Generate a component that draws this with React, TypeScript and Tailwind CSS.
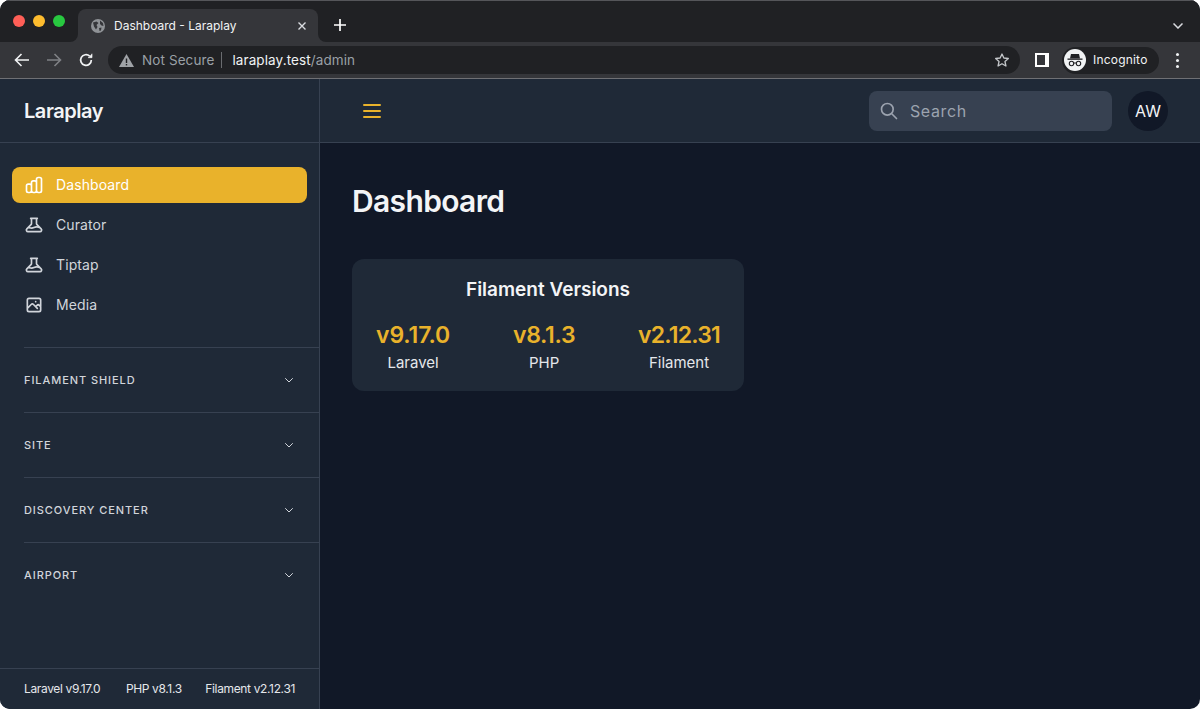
import React from "react";
import { HiOutlineChartBar, HiOutlineBeaker, HiOutlinePhotograph, HiOutlineChevronDown, HiOutlineSearch, HiOutlineMenu } from "react-icons/hi";

const font = "font-['Inter','Liberation_Sans',sans-serif]";

function NavItem({ icon, label, active }: { icon: React.ReactNode; label: string; active?: boolean }) {
  return (
    <div className={`flex items-center gap-[12px] h-[36px] px-[12px] rounded-[8px] text-[14px] tracking-[0.1px] ${active ? "bg-[#e9b22b] text-white" : "text-[#d1d5db]"}`}>
      {icon}
      <span className="pb-[1px]">{label}</span>
    </div>
  );
}

function Group({ label }: { label: string }) {
  return (
    <div className="ml-[24px] h-[65px] border-t border-[#374151] flex items-center justify-between pr-[24px] shrink-0">
      <span className="text-[11px] font-medium tracking-[0.92px] text-[#d1d5db] leading-none">{label}</span>
      <HiOutlineChevronDown className="w-[12px] h-[12px] text-[#d1d5db]" />
    </div>
  );
}

function Stat({ value, label, tracking }: { value: string; label: string; tracking: string }) {
  return (
    <div className="flex flex-col items-center">
      <div className={`text-[23px] leading-[28px] font-semibold text-[#e9b22b] ${tracking}`}>{value}</div>
      <div className="text-[15px] leading-[20px] mt-[4px] text-[#e5e7eb]">{label}</div>
    </div>
  );
}

export default function App() {
  return (
    <div className={`w-[1200px] h-[709px] bg-white ${font}`}>
      <div className="w-full h-full rounded-[10px] overflow-hidden flex flex-col bg-[#111827]">
        {/* Tab strip */}
        <div className="h-[42px] shrink-0 bg-[#202124] border-t border-[#55565a] flex items-end relative">
          <div className="flex items-center gap-[8px] pl-[13px] pt-[1px] h-full pb-[2px] absolute left-0 top-0">
            <span className="w-[12px] h-[12px] rounded-full bg-[#ff5f57]" />
            <span className="w-[12px] h-[12px] rounded-full bg-[#febc2e]" />
            <span className="w-[12px] h-[12px] rounded-full bg-[#28c840]" />
          </div>
          <div className="ml-[78px] w-[240px] h-[33px] bg-[#35363a] rounded-t-[8px] flex items-center pl-[13px] pr-[10px] text-[12px] text-[#f1f3f4] relative">
            <div className="absolute left-[-8px] bottom-0 w-[8px] h-[8px] bg-[#35363a]">
              <div className="w-full h-full bg-[#202124] rounded-br-[8px]" />
            </div>
            <div className="absolute right-[-8px] bottom-0 w-[8px] h-[8px] bg-[#35363a]">
              <div className="w-full h-full bg-[#202124] rounded-bl-[8px]" />
            </div>
            <svg width="14" height="14" viewBox="0 0 14 14" className="shrink-0">
              <circle cx="7" cy="7" r="7" fill="#8f9296" />
              <path d="M2 3.5 L5.5 2.5 L7.5 4 L5.5 6 L6.5 8 L5 10.5 L3 7.5 Z M9 1.5 L12 4 L12.5 7 L10.5 6.5 L9 5 Z M8 9 L10.5 8.5 L10 11.5 L8.5 12 Z" fill="#35363a" />
            </svg>
            <span className="ml-[9px] flex-1 whitespace-nowrap">Dashboard - Laraplay</span>
            <svg width="10" height="10" viewBox="0 0 10 10" stroke="#dadce0" strokeWidth="1.4" className="mr-[1px]">
              <path d="M1.5 1.5 L8.5 8.5 M8.5 1.5 L1.5 8.5" />
            </svg>
          </div>
          <svg width="12" height="12" viewBox="0 0 12 12" stroke="#ffffff" strokeWidth="1.7" className="ml-[16px] mb-[11px]">
            <path d="M6 0 V12 M0 6 H12" />
          </svg>
          <svg width="10" height="6" viewBox="0 0 10 6" fill="none" stroke="#dadce0" strokeWidth="1.5" className="ml-auto mr-[17px] mb-[13px]">
            <path d="M0.5 0.5 L5 5 L9.5 0.5" />
          </svg>
        </div>
        {/* Toolbar */}
        <div className="h-[37px] shrink-0 bg-[#35363a] border-b border-[#6f7074] flex items-center">
          <svg width="16" height="14" viewBox="0 0 16 14" fill="none" stroke="#f1f3f4" strokeWidth="1.6" className="ml-[14px]">
            <path d="M15 7 H2 M7.5 1 L1.5 7 L7.5 13" />
          </svg>
          <svg width="16" height="14" viewBox="0 0 16 14" fill="none" stroke="#7f8185" strokeWidth="1.6" className="ml-[16px]">
            <path d="M1 7 H14 M8.5 1 L14.5 7 L8.5 13" />
          </svg>
          <svg width="16" height="16" viewBox="0 0 24 24" fill="none" stroke="#f1f3f4" strokeWidth="2.6" className="ml-[16px]">
            <path d="M20 12a8 8 0 1 1-2.5-5.8" />
            <path d="M21 2.5 V8.5 H15" fill="#f1f3f4" strokeWidth="1" />
          </svg>
          <div className="ml-[14px] w-[912px] h-[28px] rounded-full bg-[#202124] flex items-center pl-[11px] pr-[10px] text-[13.5px] tracking-[0.1px]">
            <svg width="15" height="13" viewBox="0 0 15 13" className="shrink-0">
              <path d="M7.5 0 L15 13 H0 Z" fill="#a0a3a7" />
              <rect x="6.8" y="4.5" width="1.4" height="4.5" fill="#202124" />
              <rect x="6.8" y="10" width="1.4" height="1.4" fill="#202124" />
            </svg>
            <span className="ml-[8px] text-[#9aa0a6]">Not Secure</span>
            <span className="ml-[7px] w-px h-[16px] bg-[#6a6c70]" />
            <span className="ml-[10px] text-[#f1f3f4]">laraplay.test</span>
            <span className="text-[#9aa0a6]">/admin</span>
            <svg width="16" height="16" viewBox="0 0 24 24" fill="none" stroke="#c4c7ca" strokeWidth="2" className="ml-auto">
              <path d="M12 3 L14.8 9 L21.5 9.8 L16.5 14.3 L17.9 21 L12 17.6 L6.1 21 L7.5 14.3 L2.5 9.8 L9.2 9 Z" strokeLinejoin="round" />
            </svg>
          </div>
          <div className="ml-[15px] w-[14px] h-[14px] bg-white flex justify-start">
            <span className="ml-[2px] mt-[2px] w-[8px] h-[10px] bg-[#35363a]" />
          </div>
          <div className="ml-[13px] w-[97px] h-[27px] rounded-full bg-[#202124] flex items-center pl-[2px] text-[12px] tracking-[0.2px] text-[#f1f3f4]">
            <div className="w-[22px] h-[22px] rounded-full bg-[#f1f3f4] flex items-center justify-center">
              <svg width="16" height="14" viewBox="0 0 16 14" fill="none">
                <path d="M4 1 H12 L13 5.5 H3 Z" fill="#202124" />
                <rect x="0.5" y="5.5" width="15" height="1.3" fill="#202124" />
                <circle cx="4.5" cy="10.5" r="2.2" stroke="#202124" strokeWidth="1.1" />
                <circle cx="11.5" cy="10.5" r="2.2" stroke="#202124" strokeWidth="1.1" />
                <path d="M6.7 10 H9.3" stroke="#202124" strokeWidth="1" />
              </svg>
            </div>
            <span className="ml-[7px]">Incognito</span>
          </div>
          <div className="ml-[17px] flex flex-col gap-[3px]">
            <span className="w-[3px] h-[3px] rounded-full bg-[#f1f3f4]" />
            <span className="w-[3px] h-[3px] rounded-full bg-[#f1f3f4]" />
            <span className="w-[3px] h-[3px] rounded-full bg-[#f1f3f4]" />
          </div>
        </div>
        {/* App */}
        <div className="flex-1 flex min-h-0">
          <aside className="w-[320px] shrink-0 bg-[#1f2937] border-r border-[#374151] flex flex-col">
            <div className="h-[64px] shrink-0 border-b border-[#374151] flex items-center px-[24px]">
              <span className="text-[20px] font-semibold text-[#f3f4f6] tracking-[-0.45px]">Laraplay</span>
            </div>
            <nav className="pt-[24px] px-[12px] flex flex-col gap-[4px] pb-[24px]">
              <NavItem active label="Dashboard" icon={<HiOutlineChartBar className="w-[20px] h-[20px]" />} />
              <NavItem label="Curator" icon={<HiOutlineBeaker className="w-[20px] h-[20px]" />} />
              <NavItem label="Tiptap" icon={<HiOutlineBeaker className="w-[20px] h-[20px]" />} />
              <NavItem label="Media" icon={<HiOutlinePhotograph className="w-[20px] h-[20px]" />} />
            </nav>
            <div className="flex-1">
              <Group label="FILAMENT SHIELD" />
              <Group label="SITE" />
              <Group label="DISCOVERY CENTER" />
              <Group label="AIRPORT" />
            </div>
            <div className="h-[41px] shrink-0 border-t border-[#374151] flex items-center justify-between px-[24px] text-[12px] tracking-[-0.35px] text-[#e5e7eb]">
              <span>Laravel v9.17.0</span>
              <span className="ml-[2px]">PHP v8.1.3</span>
              <span>Filament v2.12.31</span>
            </div>
          </aside>
          <div className="flex-1 flex flex-col min-w-0">
            <header className="h-[64px] shrink-0 bg-[#1f2937] border-b border-[#374151] flex items-center pl-[40px] pr-[32px]">
              <HiOutlineMenu className="w-[24px] h-[24px] text-[#e9b22b]" />
              <div className="ml-auto w-[243px] h-[40px] rounded-[8px] bg-[#374151] flex items-center pl-[10px] text-[#9ca3af]">
                <HiOutlineSearch className="w-[20px] h-[20px]" />
                <span className="ml-[11px] text-[16px] tracking-[0.6px]">Search</span>
              </div>
              <div className="ml-[16px] w-[40px] h-[40px] rounded-full bg-[#111827] flex items-center justify-center text-[16px] text-[#f3f4f6]">AW</div>
            </header>
            <main className="flex-1 px-[32px] pt-[38px]">
              <h1 className="text-[30px] leading-[40px] font-semibold text-[#f3f4f6] tracking-[-0.65px]">Dashboard</h1>
              <div className="mt-[38px] w-[392px] h-[132px] rounded-[12px] bg-[#1f2937] pt-[16px] px-[24px]">
                <div className="text-center text-[19px] leading-[28px] font-semibold text-[#f3f4f6] pt-[1px]">Filament Versions</div>
                <div className="mt-[17px] flex justify-between">
                  <Stat value="v9.17.0" label="Laravel" tracking="tracking-[-0.1px]" />
                  <Stat value="v8.1.3" label="PHP" tracking="tracking-[-0.3px]" />
                  <Stat value="v2.12.31" label="Filament" tracking="tracking-[-0.8px]" />
                </div>
              </div>
            </main>
          </div>
        </div>
      </div>
    </div>
  );
}
